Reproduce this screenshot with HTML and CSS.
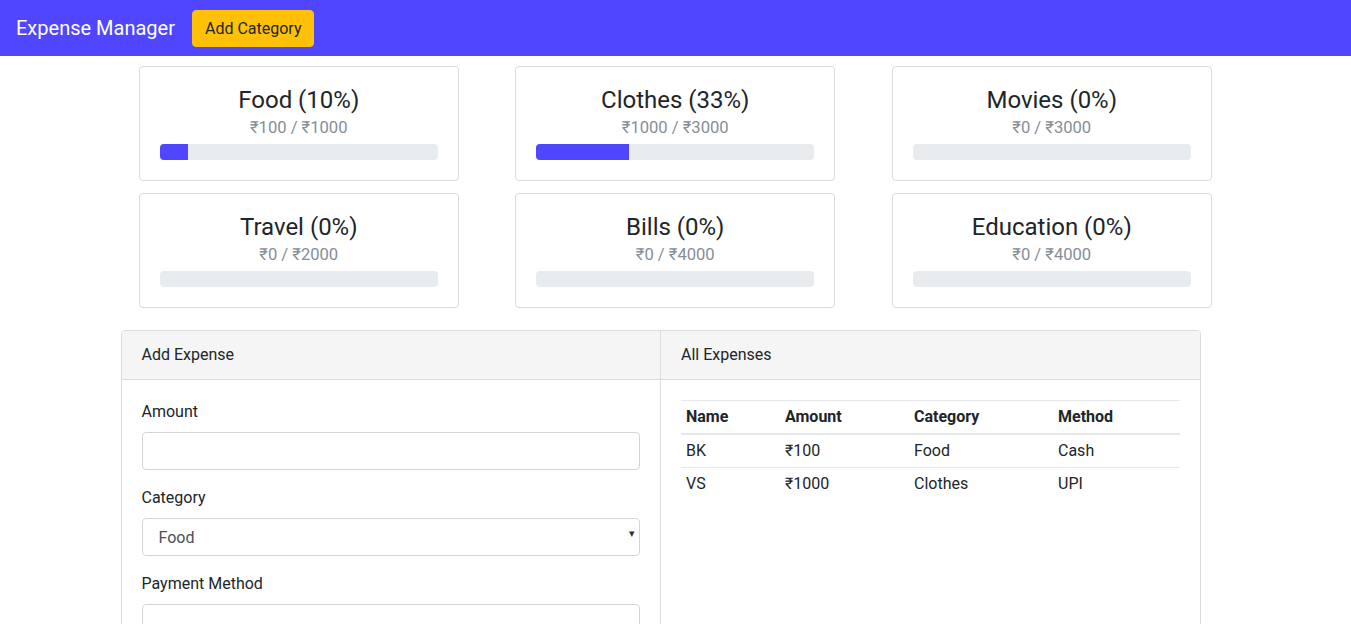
FILE: index.html
```html
<!DOCTYPE html>
<html>
<head>
<meta charset="utf-8">
<title>Expense Manager</title>
<link rel="stylesheet" href="styles.css">
</head>
<body>
<nav class="navbar">
  <span class="brand">Expense Manager</span>
  <button class="btn-add">Add Category</button>
</nav>

<section class="cards">
  <div class="card">
    <div class="card-title">Food (10%)</div>
    <div class="card-sub">₹100 / ₹1000</div>
    <div class="progress"><div class="progress-fill" style="width:10%"></div></div>
  </div>
  <div class="card">
    <div class="card-title">Clothes (33%)</div>
    <div class="card-sub">₹1000 / ₹3000</div>
    <div class="progress"><div class="progress-fill" style="width:33.33%"></div></div>
  </div>
  <div class="card">
    <div class="card-title">Movies (0%)</div>
    <div class="card-sub">₹0 / ₹3000</div>
    <div class="progress"><div class="progress-fill" style="width:0%"></div></div>
  </div>
  <div class="card">
    <div class="card-title">Travel (0%)</div>
    <div class="card-sub">₹0 / ₹2000</div>
    <div class="progress"><div class="progress-fill" style="width:0%"></div></div>
  </div>
  <div class="card">
    <div class="card-title">Bills (0%)</div>
    <div class="card-sub">₹0 / ₹4000</div>
    <div class="progress"><div class="progress-fill" style="width:0%"></div></div>
  </div>
  <div class="card">
    <div class="card-title">Education (0%)</div>
    <div class="card-sub">₹0 / ₹4000</div>
    <div class="progress"><div class="progress-fill" style="width:0%"></div></div>
  </div>
</section>

<section class="container">
  <div class="panel">
    <div class="panel-col left">
      <div class="panel-head">Add Expense</div>
      <div class="panel-body">
        <label class="field-label">Amount</label>
        <input class="field" type="text">
        <label class="field-label">Category</label>
        <div class="select-wrap">
          <select class="field select">
            <option>Food</option>
            <option>Clothes</option>
            <option>Movies</option>
          </select>
          <span class="caret">▾</span>
        </div>
        <label class="field-label">Payment Method</label>
        <input class="field" type="text">
      </div>
    </div>
    <div class="panel-col right">
      <div class="panel-head">All Expenses</div>
      <div class="panel-body table-body">
        <table class="table">
          <thead>
            <tr><th class="c1">Name</th><th class="c2">Amount</th><th class="c3">Category</th><th class="c4">Method</th></tr>
          </thead>
          <tbody>
            <tr><td>BK</td><td>₹100</td><td>Food</td><td>Cash</td></tr>
            <tr><td>VS</td><td>₹1000</td><td>Clothes</td><td>UPI</td></tr>
          </tbody>
        </table>
      </div>
    </div>
  </div>
</section>
</body>
</html>
```

FILE: styles.css
```css
* { box-sizing: border-box; }
body {
  margin: 0;
  font-family: Roboto, "Liberation Sans", sans-serif;
  color: #212529;
  background: #fff;
  font-size: 16px;
}
.navbar {
  background: #5046ff;
  height: 56px;
  display: flex;
  align-items: center;
  padding: 0 16px;
}
.brand {
  color: #fff;
  font-size: 20px;
  margin-right: 17px;
}
.btn-add {
  background: #ffc107;
  border: 1px solid #ffc107;
  border-radius: 4px;
  color: #212529;
  font-family: inherit;
  font-size: 16px;
  line-height: 24px;
  padding: 6px 12px;
  height: 37px;
}
.cards {
  display: grid;
  grid-template-columns: 320px 320px 320px;
  column-gap: 56.5px;
  row-gap: 12px;
  width: 1073px;
  margin: 10px 0 0 calc(50% - 536.75px);
}
.card {
  border: 1px solid #dcdcdc;
  border-radius: 4px;
  padding: 19px 20px 20px;
  text-align: center;
  height: 115px;
}
.card-title {
  font-size: 24px;
  line-height: 28px;
}
.card-sub {
  color: #868e96;
  font-size: 16.6px;
  line-height: 27px;
  margin-bottom: 3px;
}
.progress {
  height: 16px;
  background: #e9ecef;
  border-radius: 4px;
  overflow: hidden;
}
.progress-fill {
  height: 100%;
  background: #5046ff;
}
.container {
  width: 1110px;
  margin: 22px auto 0;
}
.panel {
  width: 1080px;
  border: 1px solid #dcdcdc;
  border-radius: 4px;
  display: flex;
  overflow: hidden;
}
.panel-col { flex: 1; }
.panel-col.left { border-right: 1px solid #dcdcdc; }
.panel-head {
  background: #f5f5f5;
  border-bottom: 1px solid #dcdcdc;
  height: 49px;
  padding: 0 20px 2px;
  display: flex;
  align-items: center;
  font-size: 16px;
}
.panel-body {
  padding: 21px 20px 20px;
  height: 260px;
}
.panel-body.table-body { padding-top: 20px; }
.field-label {
  display: block;
  line-height: 22px;
  margin-bottom: 9px;
}
.field {
  display: block;
  width: 100%;
  height: 38px;
  border: 1px solid #d5d5d5;
  border-radius: 4px;
  margin-bottom: 17px;
  font-family: inherit;
  font-size: 16px;
  color: #495057;
  background: #fff;
  padding: 0 12px;
}
.select-wrap { position: relative; }
.select {
  appearance: none;
  -webkit-appearance: none;
  padding-left: 16px;
}
.caret {
  position: absolute;
  right: 5px;
  top: 9px;
  font-size: 11px;
  color: #333;
  pointer-events: none;
}
.table {
  width: 100%;
  border-collapse: collapse;
  font-size: 16px;
}
.table th, .table td {
  text-align: left;
  padding: 5px 5px;
  line-height: 22px;
}
.table th {
  font-weight: 700;
  border-top: 1px solid #e5e7eb;
  border-bottom: 2px solid #e5e7eb;
}
.table td { border-bottom: 1px solid #e5e7eb; }
.table tbody tr:last-child td { border-bottom: none; }
.c1 { width: 99px; }
.c2 { width: 129px; }
.c3 { width: 144px; }
```
